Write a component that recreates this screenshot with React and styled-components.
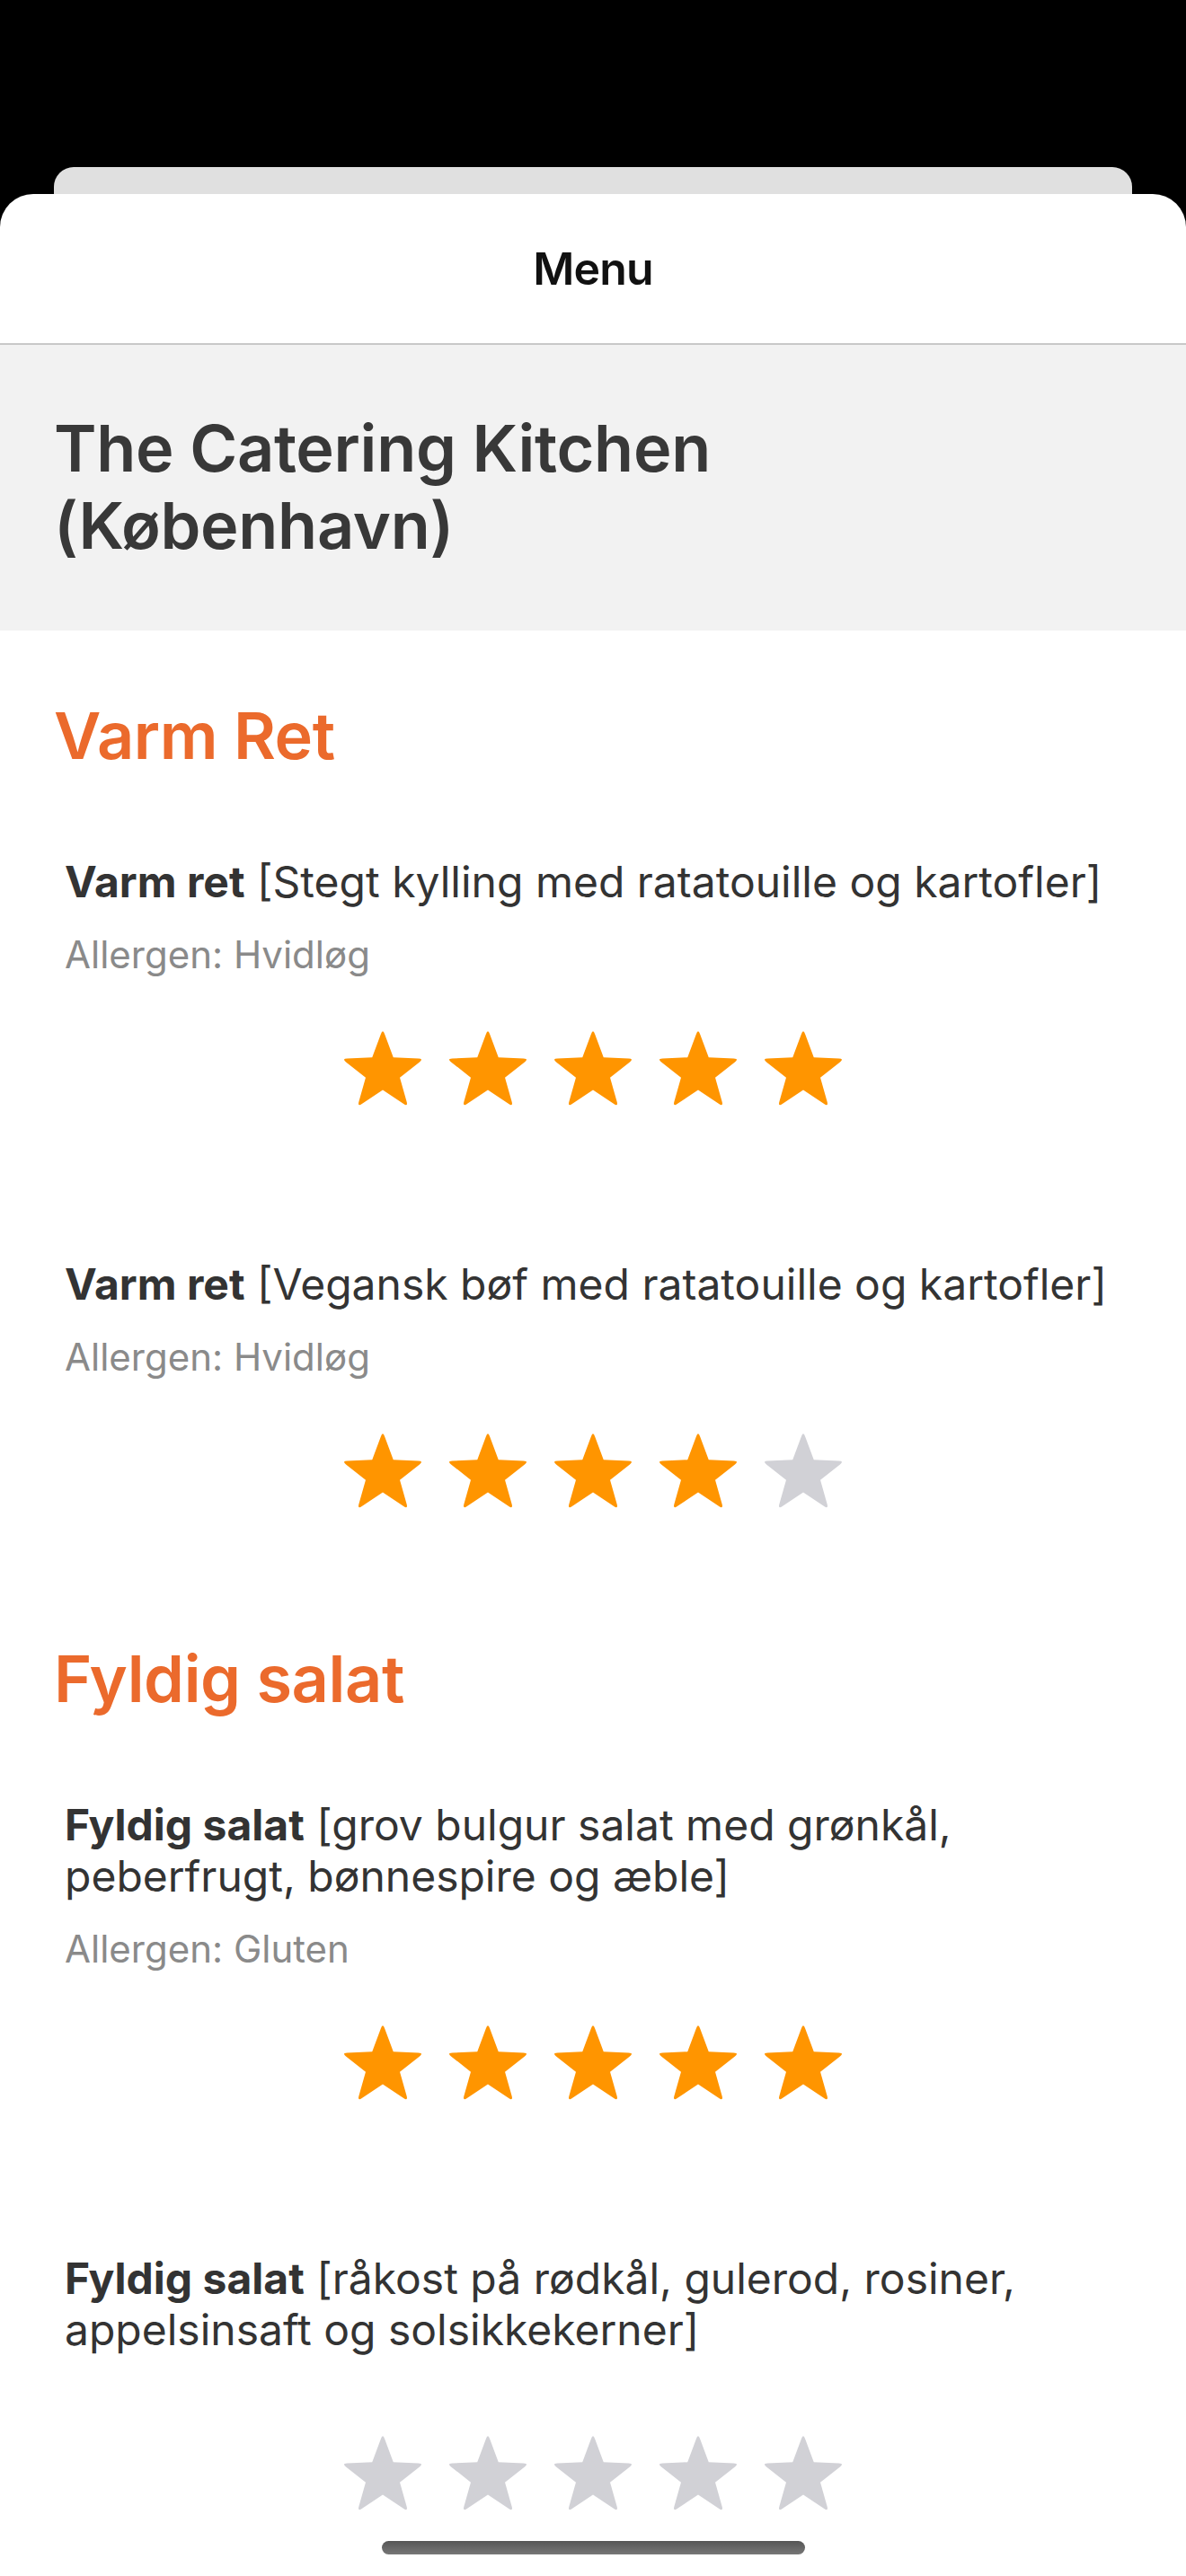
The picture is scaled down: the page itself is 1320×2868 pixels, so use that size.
import React from "react";
import styled, { createGlobalStyle } from "styled-components";

const GlobalStyle = createGlobalStyle`
  html, body { margin: 0; padding: 0; background: #000; }
  body { font-family: Inter, "Noto Sans", "Liberation Sans", sans-serif; -webkit-font-smoothing: antialiased; }
  * { box-sizing: border-box; }
`;

const Screen = styled.div`
  position: relative;
  width: 1320px;
  height: 2868px;
  overflow: hidden;
  background: #000;
  display: flex;
  flex-direction: column;
  padding-top: 186px;
`;

const BehindCard = styled.div`
  height: 30px;
  margin: 0 60px;
  background: #e0e0e0;
  border-radius: 22px 22px 0 0;
  flex: none;
`;

const Sheet = styled.div`
  flex: 1;
  background: #fff;
  border-radius: 37px 37px 0 0;
  display: flex;
  flex-direction: column;
`;

const NavBar = styled.header`
  height: 168px;
  flex: none;
  display: flex;
  align-items: center;
  justify-content: center;
  border-bottom: 2px solid #c8c8c8;
`;

const NavTitle = styled.h1`
  margin: 0;
  font-size: 50px;
  font-weight: 600;
  color: #111;
  letter-spacing: -0.8px;
`;

const RestaurantBand = styled.div`
  background: #f2f2f2;
  padding: 72px 60px 74px;
`;

const RestaurantName = styled.h2`
  margin: 0;
  max-width: 900px;
  font-size: 72px;
  line-height: 86px;
  font-weight: 600;
  color: #383838;
  letter-spacing: -0.3px;
`;

const Content = styled.main`
  display: flex;
  flex-direction: column;
  gap: 139px;
  padding: 74px 0 0;
`;

const Section = styled.section`
  display: flex;
  flex-direction: column;
`;

const SectionTitle = styled.h3`
  margin: 0 0 91px;
  padding: 0 60px;
  font-size: 72px;
  line-height: 86px;
  font-weight: 600;
  color: #eb6a2c;
  letter-spacing: -0.4px;
`;

const ItemList = styled.div`
  display: flex;
  flex-direction: column;
  gap: 162px;
`;

const Item = styled.article`
  display: flex;
  flex-direction: column;
  padding: 0 72px;
`;

const ItemText = styled.p`
  margin: 0;
  font-size: 48px;
  line-height: 57px;
  font-weight: 400;
  color: #333;
`;

const ItemKind = styled.strong`
  font-weight: 700;
  color: #333;
`;

const Allergen = styled.p`
  margin: 28px 0 0;
  font-size: 42px;
  line-height: 50px;
  color: #8a8a8a;
`;

const Rating = styled.div`
  display: flex;
  justify-content: center;
  gap: 21px;
  margin-top: ${(p) => (p.$afterAllergen ? 55 : 85)}px;
`;

const HomeIndicator = styled.div`
  position: absolute;
  left: 425px;
  top: 2829px;
  width: 471px;
  height: 15px;
  border-radius: 8px;
  background: linear-gradient(#555, #777);
`;

function buildStarPath() {
  const cx = 48;
  const cy = 50.5;
  const R = 48;
  const r = 20;
  const pts = [];
  for (let i = 0; i < 10; i++) {
    const ang = (-90 + i * 36) * (Math.PI / 180);
    const rad = i % 2 === 0 ? R : r;
    pts.push([cx + rad * Math.cos(ang), cy + rad * Math.sin(ang)]);
  }
  const d = 6;
  const lerp = (a, b, t) => [a[0] + (b[0] - a[0]) * t, a[1] + (b[1] - a[1]) * t];
  const dist = (a, b) => Math.hypot(b[0] - a[0], b[1] - a[1]);
  let path = "";
  for (let i = 0; i < 10; i++) {
    const p = pts[i];
    if (i % 2 === 0) {
      const prev = pts[(i + 9) % 10];
      const next = pts[(i + 1) % 10];
      const a = lerp(p, prev, d / dist(p, prev));
      const b = lerp(p, next, d / dist(p, next));
      path += `${i === 0 ? "M" : "L"}${a[0].toFixed(2)} ${a[1].toFixed(2)} Q${p[0].toFixed(2)} ${p[1].toFixed(2)} ${b[0].toFixed(2)} ${b[1].toFixed(2)} `;
    } else {
      path += `L${p[0].toFixed(2)} ${p[1].toFixed(2)} `;
    }
  }
  return path + "Z";
}

const STAR_PATH = buildStarPath();

function Star({ filled }) {
  return (
    <svg width="96" height="96" viewBox="0 0 96 96" aria-hidden="true">
      <path d={STAR_PATH} fill={filled ? "#ff9500" : "#d1d1d6"} />
    </svg>
  );
}

const menu = [
  {
    title: "Varm Ret",
    items: [
      { kind: "Varm ret", dish: "[Stegt kylling med ratatouille og kartofler]", allergen: "Hvidløg", rating: 5 },
      { kind: "Varm ret", dish: "[Vegansk bøf med ratatouille og kartofler]", allergen: "Hvidløg", rating: 4 },
    ],
  },
  {
    title: "Fyldig salat",
    items: [
      { kind: "Fyldig salat", dish: "[grov bulgur salat med grønkål, peberfrugt, bønnespire og æble]", allergen: "Gluten", rating: 5 },
      { kind: "Fyldig salat", dish: "[råkost på rødkål, gulerod, rosiner, appelsinsaft og solsikkekerner]", allergen: null, rating: 0 },
    ],
  },
];

export default function App() {
  return (
    <>
      <GlobalStyle />
      <Screen>
        <BehindCard />
        <Sheet>
          <NavBar>
            <NavTitle>Menu</NavTitle>
          </NavBar>
          <RestaurantBand>
            <RestaurantName>The Catering Kitchen (København)</RestaurantName>
          </RestaurantBand>
          <Content>
            {menu.map((section) => (
              <Section key={section.title}>
                <SectionTitle>{section.title}</SectionTitle>
                <ItemList>
                  {section.items.map((item, idx) => (
                    <Item key={idx}>
                      <ItemText>
                        <ItemKind>{item.kind}</ItemKind> {item.dish}
                      </ItemText>
                      {item.allergen && <Allergen>Allergen: {item.allergen}</Allergen>}
                      <Rating $afterAllergen={!!item.allergen}>
                        {[1, 2, 3, 4, 5].map((n) => (
                          <Star key={n} filled={n <= item.rating} />
                        ))}
                      </Rating>
                    </Item>
                  ))}
                </ItemList>
              </Section>
            ))}
          </Content>
        </Sheet>
        <HomeIndicator />
      </Screen>
    </>
  );
}
